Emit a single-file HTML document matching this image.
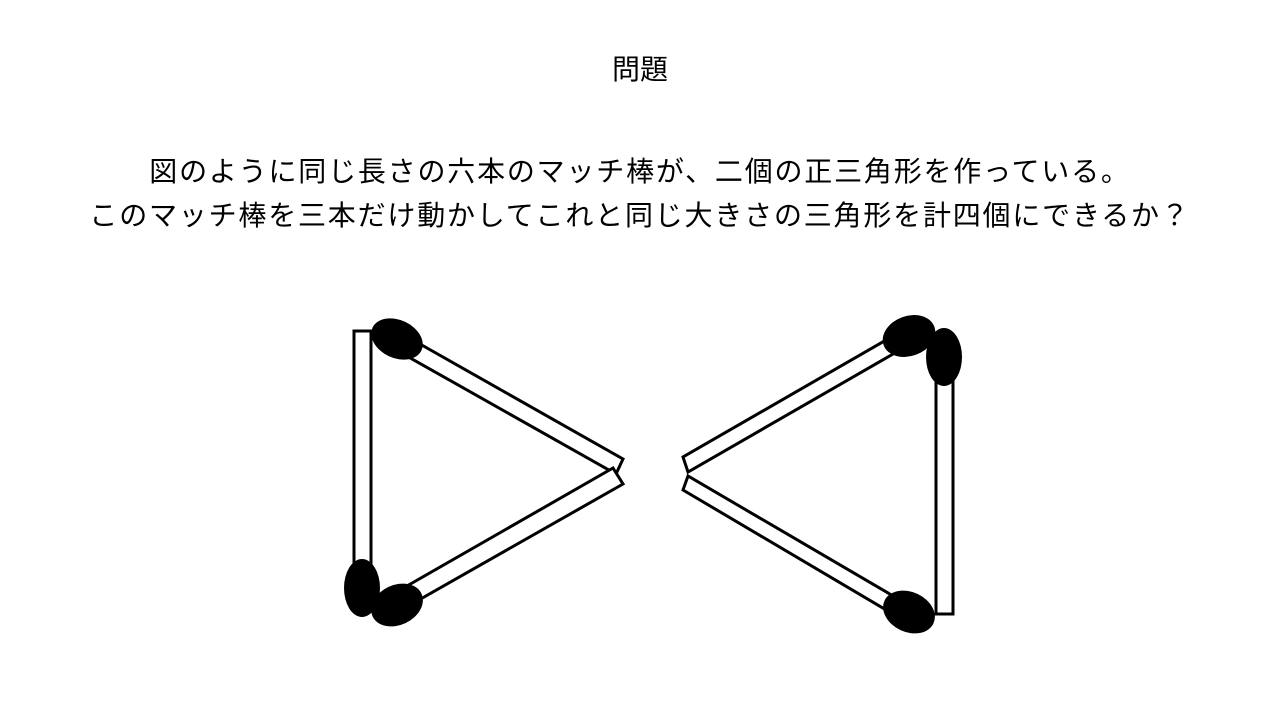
<!DOCTYPE html>
<html><head><meta charset="utf-8"><style>
html,body{margin:0;padding:0;background:#fff;width:1280px;height:720px;overflow:hidden}
.t{position:absolute;left:0;width:1280px;text-align:center;font-family:"Liberation Sans","Noto Sans CJK JP",sans-serif;color:#000;white-space:nowrap}
</style></head><body>
<div class="t" style="top:52px;font-size:28px;line-height:36px">問題</div>
<div class="t" style="top:150px;font-size:28px;line-height:44px;letter-spacing:1.8px">図のように同じ長さの六本のマッチ棒が、二個の正三角形を作っている。<br>このマッチ棒を三本だけ動かしてこれと同じ大きさの三角形を計四個にできるか？</div>
<svg width="1280" height="720" style="position:absolute;left:0;top:0" fill="#fff" stroke="#000" stroke-width="3">
<rect x="354" y="331" width="17" height="255"/>
<polygon points="397,331 623,459 616,474 389,346"/>
<polygon points="613,468 623,484 410,605 400,590"/>
<ellipse cx="397" cy="339" rx="27" ry="19" transform="rotate(25 397 339)" fill="#000" stroke="none"/>
<ellipse cx="362" cy="588" rx="18" ry="29" fill="#000" stroke="none"/>
<ellipse cx="397" cy="605" rx="27" ry="20" transform="rotate(-25 397 605)" fill="#000" stroke="none"/>
<rect x="936" y="370" width="17" height="244"/>
<polygon points="683,457 688,472 900,350 893,336"/>
<polygon points="683,490 688,476 900,600 893,614"/>
<ellipse cx="909" cy="336" rx="27" ry="20" transform="rotate(-20 909 336)" fill="#000" stroke="none"/>
<ellipse cx="944" cy="357" rx="18" ry="29" fill="#000" stroke="none"/>
<ellipse cx="909" cy="612" rx="27" ry="20" transform="rotate(25 909 612)" fill="#000" stroke="none"/>
</svg>
</body></html>
